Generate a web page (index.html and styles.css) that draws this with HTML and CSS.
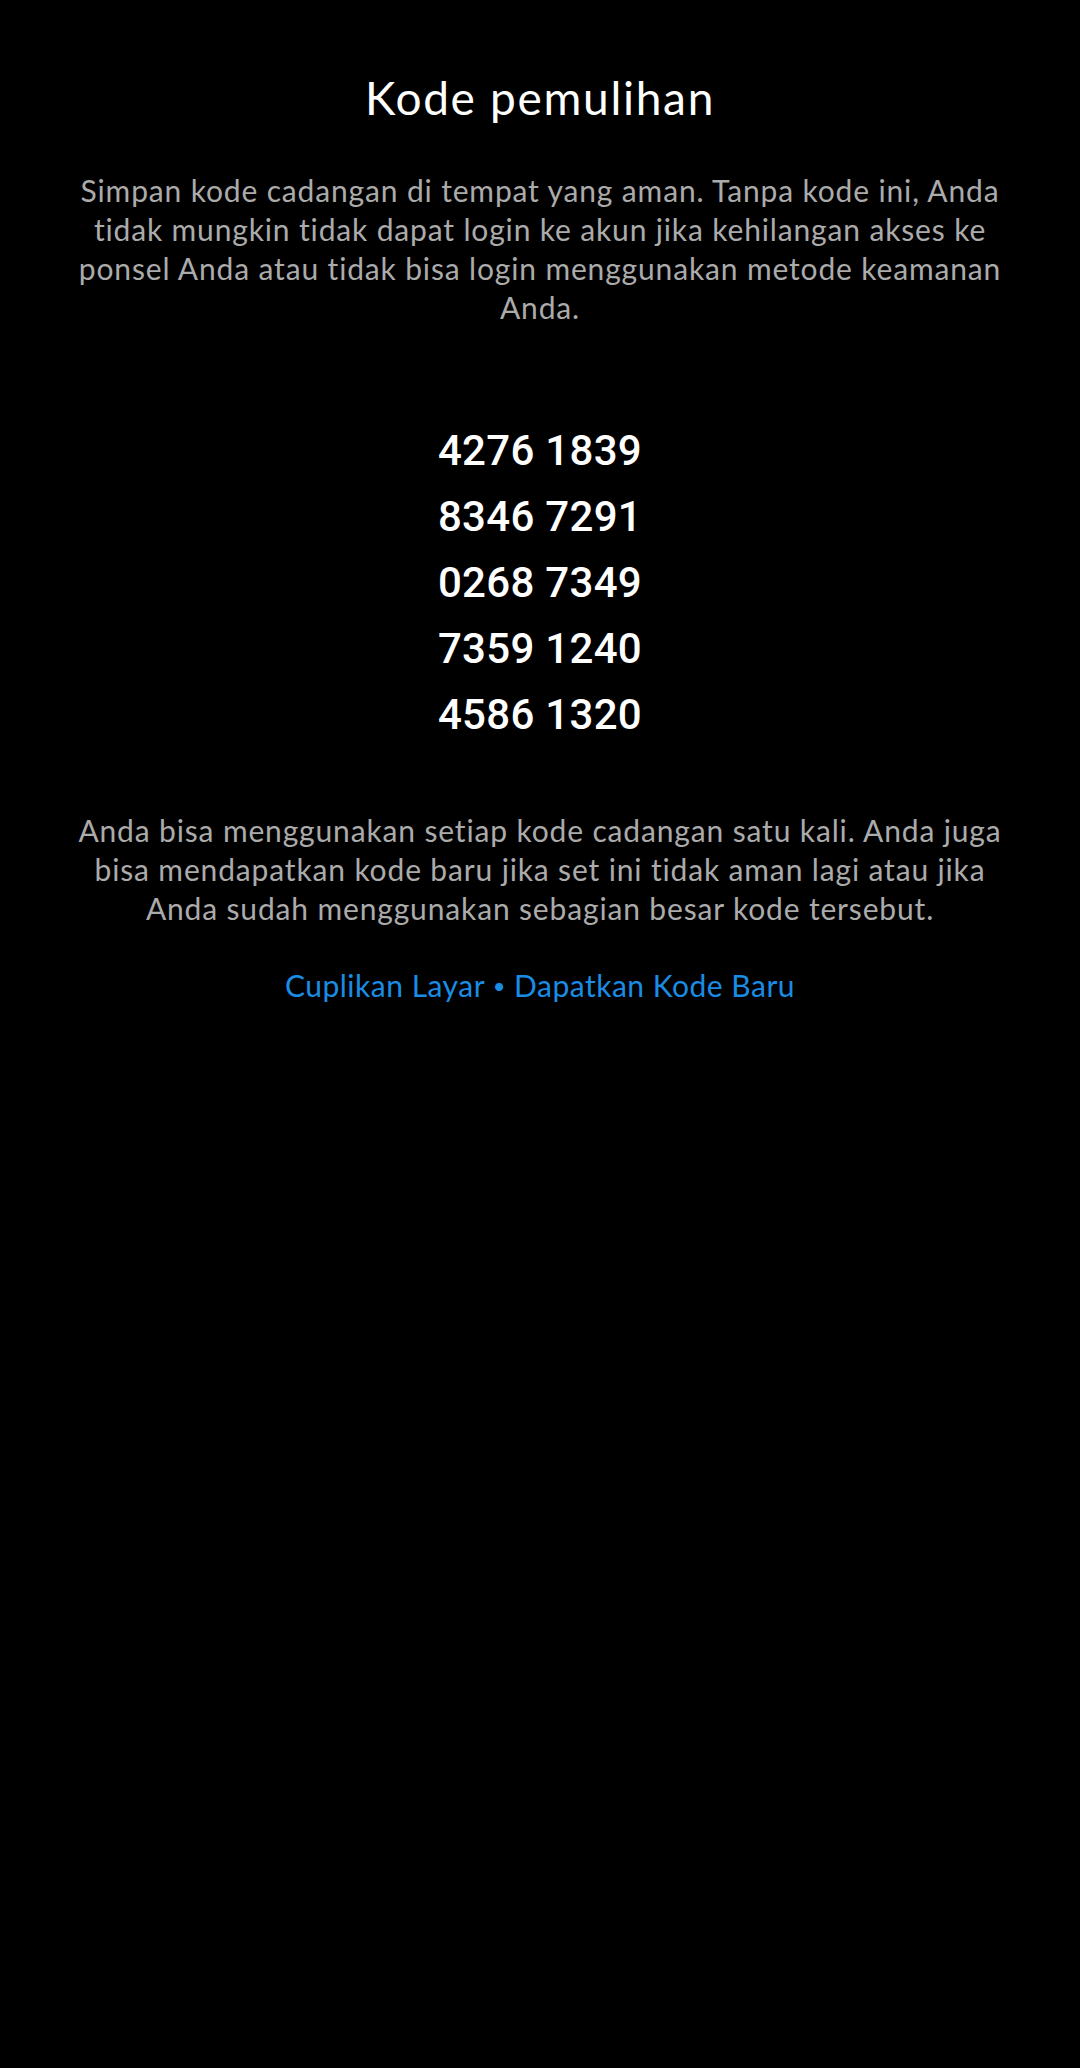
FILE: index.html
```html
<!DOCTYPE html>
<html lang="id">
<head>
<meta charset="utf-8">
<title>Kode pemulihan</title>
<link rel="stylesheet" href="styles.css">
</head>
<body>
<main class="page">
  <h1 class="title">Kode pemulihan</h1>
  <p class="text">Simpan kode cadangan di tempat yang aman. Tanpa kode ini, Anda<br>tidak mungkin tidak dapat login ke akun jika kehilangan akses ke<br>ponsel Anda atau tidak bisa login menggunakan metode keamanan<br>Anda.</p>
  <ul class="codes">
    <li>4276 1839</li>
    <li>8346 7291</li>
    <li>0268 7349</li>
    <li>7359 1240</li>
    <li>4586 1320</li>
  </ul>
  <p class="text text-after">Anda bisa menggunakan setiap kode cadangan satu kali. Anda juga<br>bisa mendapatkan kode baru jika set ini tidak aman lagi atau jika<br>Anda sudah menggunakan sebagian besar kode tersebut.</p>
  <p class="links"><a href="#">Cuplikan Layar</a> <span class="dot">•</span> <a href="#">Dapatkan Kode Baru</a></p>
</main>
</body>
</html>
```
FILE: styles.css
```css
html, body {
  margin: 0;
  padding: 0;
  background: #000;
}
body {
  width: 1080px;
  min-height: 2068px;
  font-family: Lato, "Open Sans", sans-serif;
  font-variant-ligatures: none;
}
.page {
  display: flex;
  flex-direction: column;
  align-items: center;
  padding-top: 70px;
}
.title {
  margin: 0;
  font-family: Lato, "Open Sans", sans-serif;
  font-weight: 400;
  font-size: 46px;
  line-height: 56px;
  letter-spacing: 1.7px;
  color: #fff;
}
.text {
  margin: 45px 0 0;
  width: 1000px;
  text-align: center;
  font-size: 30px;
  line-height: 39px;
  letter-spacing: 0.85px;
  color: #ababab;
}
.codes {
  list-style: none;
  margin: 91px 0 0;
  padding: 0;
  text-align: center;
  font-family: Roboto, sans-serif;
  font-weight: 500;
  font-size: 42px;
  line-height: 66px;
  letter-spacing: 0.3px;
  color: #fff;
}
.text-after {
  margin-top: 63px;
}
.links {
  margin: 38px 0 0;
  font-size: 30px;
  line-height: 39px;
  letter-spacing: 0.5px;
  color: #1a8ce4;
}
.links a {
  color: #1a8ce4;
  text-decoration: none;
}
.dot {
  font-size: 22px;
  vertical-align: 3px;
}
```
